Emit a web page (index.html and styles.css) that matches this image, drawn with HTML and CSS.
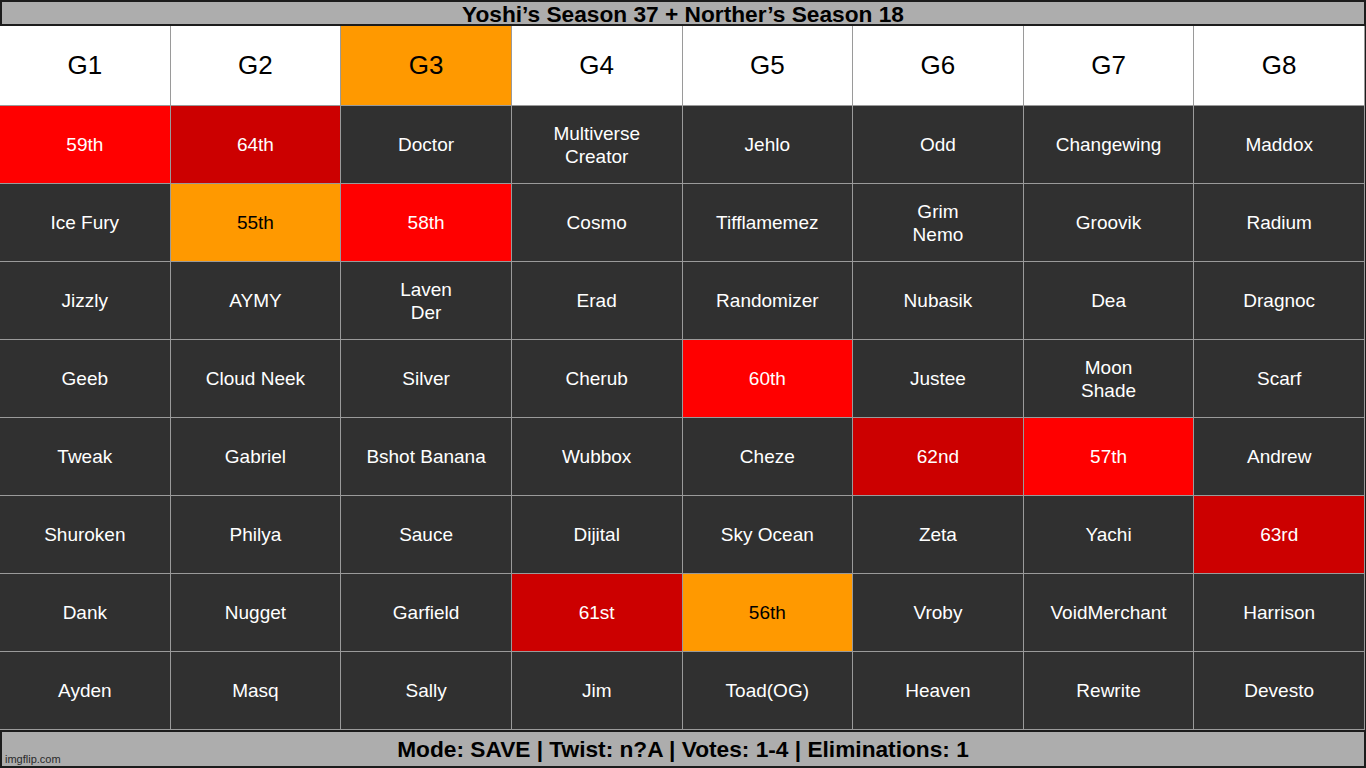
FILE: index.html
```html
<!DOCTYPE html>
<html>
<head>
<meta charset="utf-8">
<link rel="stylesheet" href="styles.css">
</head>
<body>
<div class="page">
  <div class="title">Yoshi’s Season 37 + Norther’s Season 18</div>
  <div class="board">
    <div class="cell head">G1</div>
    <div class="cell head">G2</div>
    <div class="cell head orange">G3</div>
    <div class="cell head">G4</div>
    <div class="cell head">G5</div>
    <div class="cell head">G6</div>
    <div class="cell head">G7</div>
    <div class="cell head">G8</div>

    <div class="cell red">59th</div>
    <div class="cell dred">64th</div>
    <div class="cell">Doctor</div>
    <div class="cell">Multiverse<br>Creator</div>
    <div class="cell">Jehlo</div>
    <div class="cell">Odd</div>
    <div class="cell">Changewing</div>
    <div class="cell">Maddox</div>

    <div class="cell">Ice Fury</div>
    <div class="cell orange">55th</div>
    <div class="cell red">58th</div>
    <div class="cell">Cosmo</div>
    <div class="cell">Tifflamemez</div>
    <div class="cell">Grim<br>Nemo</div>
    <div class="cell">Groovik</div>
    <div class="cell">Radium</div>

    <div class="cell">Jizzly</div>
    <div class="cell">AYMY</div>
    <div class="cell">Laven<br>Der</div>
    <div class="cell">Erad</div>
    <div class="cell">Randomizer</div>
    <div class="cell">Nubasik</div>
    <div class="cell">Dea</div>
    <div class="cell">Dragnoc</div>

    <div class="cell">Geeb</div>
    <div class="cell">Cloud Neek</div>
    <div class="cell">Silver</div>
    <div class="cell">Cherub</div>
    <div class="cell red">60th</div>
    <div class="cell">Justee</div>
    <div class="cell">Moon<br>Shade</div>
    <div class="cell">Scarf</div>

    <div class="cell">Tweak</div>
    <div class="cell">Gabriel</div>
    <div class="cell">Bshot Banana</div>
    <div class="cell">Wubbox</div>
    <div class="cell">Cheze</div>
    <div class="cell dred">62nd</div>
    <div class="cell red">57th</div>
    <div class="cell">Andrew</div>

    <div class="cell">Shuroken</div>
    <div class="cell">Philya</div>
    <div class="cell">Sauce</div>
    <div class="cell">Dijital</div>
    <div class="cell">Sky Ocean</div>
    <div class="cell">Zeta</div>
    <div class="cell">Yachi</div>
    <div class="cell dred">63rd</div>

    <div class="cell">Dank</div>
    <div class="cell">Nugget</div>
    <div class="cell">Garfield</div>
    <div class="cell dred">61st</div>
    <div class="cell orange">56th</div>
    <div class="cell">Vroby</div>
    <div class="cell">VoidMerchant</div>
    <div class="cell">Harrison</div>

    <div class="cell">Ayden</div>
    <div class="cell">Masq</div>
    <div class="cell">Sally</div>
    <div class="cell">Jim</div>
    <div class="cell">Toad(OG)</div>
    <div class="cell">Heaven</div>
    <div class="cell">Rewrite</div>
    <div class="cell">Devesto</div>
  </div>
  <div class="footer">Mode: SAVE | Twist: n?A | Votes: 1-4 | Eliminations: 1</div>
  <div class="watermark">imgflip.com</div>
</div>
</body>
</html>
```

FILE: styles.css
```css
* { box-sizing: border-box; }
html, body {
  margin: 0;
  padding: 0;
  background: #1c1c1c;
}
.page {
  position: relative;
  width: 1366px;
  height: 768px;
  display: flex;
  flex-direction: column;
  font-family: "Liberation Sans", Arial, sans-serif;
  background: #1c1c1c;
}
.title {
  height: 26px;
  border: 2px solid #1c1c1c;
  background: #adadad;
  color: #000;
  font-weight: bold;
  font-size: 22.7px;
  line-height: 24px;
  text-align: center;
}
.board {
  width: 1365px;
  display: grid;
  grid-template-columns: repeat(8, 1fr);
  grid-template-rows: 79px repeat(8, 77px);
  gap: 1px;
  padding-right: 1px;
  padding-bottom: 1px;
  background: #9a9a9a;
}
.cell {
  display: flex;
  align-items: center;
  justify-content: center;
  text-align: center;
  background: #303030;
  color: #fff;
  font-size: 19px;
  line-height: 23px;
}
.cell.head {
  background: #fff;
  color: #000;
  font-size: 26px;
}
.cell.orange {
  background: #ff9900;
  color: #000;
}
.cell.red {
  background: #ff0000;
  color: #fff;
}
.cell.dred {
  background: #cc0000;
  color: #fff;
}
.footer {
  flex: 1;
  border: 2px solid #1c1c1c;
  background: #adadad;
  color: #000;
  font-weight: bold;
  font-size: 22.7px;
  line-height: 34px;
  text-align: center;
}
.watermark {
  position: absolute;
  left: 5px;
  bottom: 3px;
  font-size: 11px;
  color: #2a2a2a;
  line-height: 12px;
}
```
